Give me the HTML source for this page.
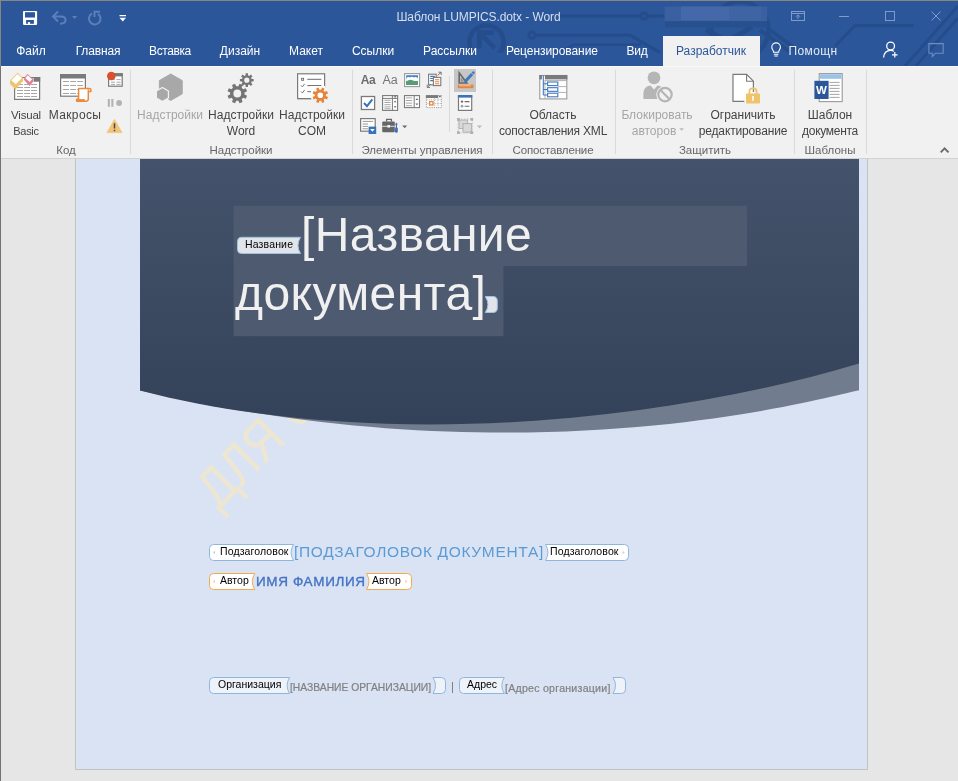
<!DOCTYPE html>
<html lang="ru">
<head>
<meta charset="utf-8">
<title>Шаблон LUMPICS.dotx - Word</title>
<style>
html,body{margin:0;padding:0;background:#e6e6e6}
body{width:958px;height:781px;overflow:hidden;position:relative;background:#e6e6e6;font-family:"Liberation Sans",sans-serif;font-size:12px;color:#444}
.a{position:absolute}
.t,.tg,#ttl1,#ttl2,#sub,#auth,#org,#addr{will-change:transform}
.t{position:absolute;white-space:nowrap;line-height:16px;height:16px;text-align:center}
#titlebar{left:0;top:0;width:958px;height:66px;background:#2b579a}
#titlebar .t{color:#fff}
#ribbon{left:0;top:66px;width:958px;height:92px;background:#f1f1f1;border-bottom:1px solid #d2d2d2;box-shadow:inset 0 1px 0 #f9f9f9}
.sep{position:absolute;width:1px;background:#dadada;top:70px;height:84px}
.dis{color:#a6a6a6}
.gl{color:#666;font-size:11.5px}
#doc{left:0;top:159px;width:958px;height:622px;background:#e6e6e6;overflow:hidden}
#page{left:75px;top:-10px;width:791px;height:619px;background:#dae3f3;border:1px solid #c3c3c3}
svg{position:absolute;overflow:visible}
.tg{position:absolute;white-space:nowrap;font-size:10.5px;line-height:14px;color:#000}
</style>
</head>
<body>
<!-- TITLE BAR -->
<div id="titlebar" class="a">
  <svg id="circuit" class="a" style="left:0;top:0" width="958" height="66" viewBox="0 0 958 66">
    <g fill="none" stroke="#254d8c" stroke-width="3.2">
      <clipPath id="cc"><rect x="460" y="20" width="60" height="32.5"/></clipPath>
      <circle cx="486.5" cy="42.3" r="17.1" stroke-width="4.6" clip-path="url(#cc)"/>
      <path d="M494.6 48 L481 34.4 M479.4 48.4 V32.6 H493.8" stroke-width="4.6"/>
      <path d="M559 16.1 H640 M648 16.1 H668"/>
      <circle cx="644.1" cy="16.1" r="3.2" stroke-width="3"/>
      <circle cx="532" cy="35.1" r="3.2" stroke-width="3"/>
      <path d="M536 35.1 H630 L660 52.5"/>
      <path d="M558 53 L574 44.6 H641" stroke-width="2.6"/>
      <circle cx="740" cy="30" r="28.5" stroke-width="4.5"/>
      <path d="M706 30 L728 41 L752 27" stroke-width="5"/>
      <path d="M835 46 L855 25.6 H914"/>
      <path d="M905 66 L958 6 M916 66 L958 18" stroke-width="3"/>
      <path d="M760 30 L790 52 M770 30 L800 52" stroke-width="4"/>
    </g>
    <rect x="665" y="20" width="102" height="7.5" fill="#27508f"/>
    <rect x="664.6" y="6.5" width="102.6" height="14.6" fill="#3a60a1"/>
    <rect x="681" y="6.5" width="48" height="14" fill="#4468a8"/>
    <rect x="729" y="6.5" width="32" height="14.4" fill="#3f64a4"/>
    <!-- QAT -->
    <rect x="23" y="10.9" width="14.1" height="14" rx="0.8" fill="#fff"/>
    <rect x="25" y="12.2" width="10" height="5.3" fill="#2b579a"/>
    <rect x="26.1" y="20" width="7.8" height="3.8" fill="#2b579a"/>
    <rect x="27.9" y="22.1" width="2.2" height="2" fill="#fff"/>
    <g fill="none" stroke="#5c7fb9" stroke-width="2">
      <path d="M58 11.5 L53 16.5 L58 21.5 M53.5 16.5 H61 Q65.6 16.5 65.6 20.3 Q65.6 23.5 60 23.7"/>
      <path d="M92 13.5 A5.8 5.8 0 1 0 98 13.8 M94.5 17 V11.8 H100"/>
    </g>
    <path d="M72 16 H77.2 L74.6 19 Z" fill="#5c7fb9"/>
    <path d="M119.5 15 H126 V16.2 H119.5 Z M119.5 17.8 H126 L122.75 21.5 Z" fill="#fff"/>
    <!-- window controls -->
    <g fill="none" stroke="#7f9acb" stroke-width="1">
      <rect x="791.5" y="11.5" width="13" height="9"/>
      <path d="M791.5 13.5 H804.5 M798 19 V15 M796 16.8 L798 14.8 L800 16.8"/>
      <path d="M839 16.5 H849"/>
      <rect x="885.5" y="11.5" width="9" height="9"/>
      <path d="M931.5 11.5 L940.5 20.5 M940.5 11.5 L931.5 20.5"/>
    </g>
    <!-- bulb -->
    <g fill="none" stroke="#fff" stroke-width="1.1">
      <path d="M773.6 52.3 C773.6 50 771.8 49.6 771.8 47.2 A4.3 4.3 0 0 1 780.4 47.2 C780.4 49.6 778.6 50 778.6 52.3 Z"/>
      <path d="M773.8 54.2 H778.4 M774.3 56 H777.9"/>
    </g>
    <!-- share person -->
    <g fill="none" stroke="#fff" stroke-width="1.3">
      <circle cx="890.6" cy="46" r="3.9"/>
      <path d="M883.6 57.5 C884 52.5 887 50.3 890.6 50.3 C892 50.3 893 50.6 894 51.2"/>
      <path d="M894.8 52 V57.6 M892 54.8 H897.6" stroke-width="1.2"/>
    </g>
    <!-- comment -->
    <path d="M928.9 43.6 H943.2 V53.2 H935.5 L932.3 56.6 V53.2 H928.9 Z" fill="none" stroke="#6d8dc3" stroke-width="1.1"/>
  </svg>
  <div class="t" style="left:380px;top:9px;width:197px;color:#d5dfee;letter-spacing:-0.08px">Шаблон LUMPICS.dotx - Word</div>
  <div class="t" style="left:11px;top:43px;width:40px">Файл</div>
  <div class="t" style="left:68px;top:43px;width:60px;letter-spacing:-0.15px">Главная</div>
  <div class="t" style="left:140px;top:43px;width:60px;letter-spacing:-0.4px">Вставка</div>
  <div class="t" style="left:210px;top:43px;width:60px">Дизайн</div>
  <div class="t" style="left:276px;top:43px;width:60px">Макет</div>
  <div class="t" style="left:343px;top:43px;width:60px">Ссылки</div>
  <div class="t" style="left:410px;top:43px;width:80px">Рассылки</div>
  <div class="t" style="left:491.9px;top:43px;width:120px;letter-spacing:-0.05px">Рецензирование</div>
  <div class="t" style="left:616.8px;top:43px;width:40px;letter-spacing:-0.3px">Вид</div>
  <div class="a" style="left:663px;top:36px;width:97px;height:30px;background:#f1f1f1"></div>
  <div class="t" style="left:662px;top:43px;width:98px;color:#2b579a">Разработчик</div>
  <div class="t" style="left:788px;top:43px;width:50px;color:#e3eaf5;letter-spacing:0.4px">Помощн</div>
</div>
<!-- RIBBON -->
<div id="ribbon" class="a"></div>
<div class="sep" style="left:130px"></div>
<div class="sep" style="left:352px"></div>
<div class="sep" style="left:492px"></div>
<div class="sep" style="left:615px"></div>
<div class="sep" style="left:794px"></div>
<div class="sep" style="left:866px"></div>
<div class="sep" style="left:449px;top:76px;height:56px"></div>

<div class="t" style="left:0px;top:107px;width:52px;letter-spacing:-0.2px;font-size:11.5px">Visual</div>
<div class="t" style="left:0px;top:123px;width:52px;letter-spacing:-0.3px;font-size:11px">Basic</div>
<div class="t" style="left:45px;top:107px;width:60px;letter-spacing:0.35px">Макросы</div>
<div class="t gl" style="left:36px;top:142px;width:60px">Код</div>

<div class="t dis" style="left:130px;top:107px;width:80px">Надстройки</div>
<div class="t" style="left:201px;top:107px;width:80px">Надстройки</div>
<div class="t" style="left:201px;top:123px;width:80px">Word</div>
<div class="t" style="left:272px;top:107px;width:80px">Надстройки</div>
<div class="t" style="left:272px;top:123px;width:80px">COM</div>
<div class="t gl" style="left:201px;top:142px;width:80px">Надстройки</div>

<div class="t" style="left:359px;top:72px;width:18px;font-weight:bold;color:#6e6e6e;letter-spacing:-0.3px">Aa</div>
<div class="t" style="left:381px;top:72px;width:18px;color:#777;font-size:12.5px;letter-spacing:-0.2px">Aa</div>
<div class="t gl" style="left:352px;top:142px;width:140px">Элементы управления</div>

<div class="t" style="left:493px;top:107px;width:120px">Область</div>
<div class="t" style="left:493px;top:123px;width:120px;letter-spacing:-0.2px">сопоставления XML</div>
<div class="t gl" style="left:493px;top:142px;width:120px;letter-spacing:-0.15px">Сопоставление</div>

<div class="t dis" style="left:617px;top:107px;width:80px">Блокировать</div>
<div class="t dis" style="left:614px;top:123px;width:80px">авторов</div>
<div class="t" style="left:693px;top:107px;width:100px">Ограничить</div>
<div class="t" style="left:693px;top:123px;width:100px;letter-spacing:-0.15px">редактирование</div>
<div class="t gl" style="left:655px;top:142px;width:100px">Защитить</div>

<div class="t" style="left:790px;top:107px;width:80px">Шаблон</div>
<div class="t" style="left:790px;top:123px;width:80px;letter-spacing:-0.3px">документа</div>
<div class="t gl" style="left:790px;top:142px;width:80px">Шаблоны</div>

<!-- RIBBON-ICONS-START -->
<svg class="a" style="left:0;top:0" width="958" height="160" viewBox="0 0 958 160">
<rect x="14.6" y="77.6" width="25" height="21.8" fill="#fff" stroke="#7a7a7a" stroke-width="1.2"/>
<rect x="33.6" y="77" width="6.6" height="4.7" fill="#7a7a7a"/>
<path d="M17 84.5 H23 M24.1 84.5 H30.1 M31.1 84.5 H37" stroke="#a6a6a6" stroke-width="1" fill="none"/>
<path d="M17 87.5 H23 M24.1 87.5 H30.1 M31.1 87.5 H37" stroke="#a6a6a6" stroke-width="1" fill="none"/>
<path d="M17 90.5 H23 M24.1 90.5 H30.1 M31.1 90.5 H37" stroke="#a6a6a6" stroke-width="1" fill="none"/>
<path d="M17 93.5 H23 M24.1 93.5 H30.1 M31.1 93.5 H37" stroke="#a6a6a6" stroke-width="1" fill="none"/>
<path d="M17 96.5 H23 M24.1 96.5 H30.1 M31.1 96.5 H37" stroke="#a6a6a6" stroke-width="1" fill="none"/>
<path d="M10 80.5 L17.5 72.7 L23 77.9 L23 81 L15.4 89.4 L10 83.7 Z" fill="#eec56f"/>
<path d="M11.3 80.3 L17.5 74.1 L22 78.1 L15.8 84.2 Z" fill="#fff"/>
<path d="M24.1 77.9 L27.4 74.1 L33.2 79 L33.2 81.6 L29.5 86 L24.1 80 Z" fill="#e47d92"/>
<path d="M25.4 78.2 L27.7 75.3 L32.1 79.3 L29.7 82.1 Z" fill="#fff"/>
<rect x="60.6" y="74.6" width="24.8" height="21.6" fill="#fff" stroke="#7a7a7a" stroke-width="1.2"/>
<rect x="60" y="74" width="26" height="4.5" fill="#7a7a7a"/>
<path d="M62.9 81.5 H68.9 M70.2 81.5 H76 M77.2 81.5 H83.1" stroke="#a6a6a6" stroke-width="1" fill="none"/>
<path d="M62.9 85.5 H68.9 M70.2 85.5 H76 M77.2 85.5 H83.1" stroke="#a6a6a6" stroke-width="1" fill="none"/>
<path d="M62.9 89.5 H68.9 M70.2 89.5 H76 M77.2 89.5 H83.1" stroke="#a6a6a6" stroke-width="1" fill="none"/>
<path d="M62.9 93.5 H68.9 M70.2 93.5 H76 M77.2 93.5 H83.1" stroke="#a6a6a6" stroke-width="1" fill="none"/>
<rect x="77" y="86.8" width="15" height="16" fill="#f1f1f1" opacity="0"/>
<path d="M78.6 88.5 H89 Q90.9 88.5 90.9 90.2 V91.6 H88.3 V98.8 Q88.3 101.2 86 101.2 H76.8 Q76 99.2 77.8 99 H78.6 Z" fill="#fff" stroke="#ea8a3c" stroke-width="1.5" stroke-linejoin="round"/>
<path d="M76.4 100.2 H84.8" stroke="#ea8a3c" stroke-width="2.2" fill="none"/>
<path d="M88.3 91.6 V89.2" stroke="#ea8a3c" stroke-width="1.2" fill="none"/>
<rect x="108.6" y="73.8" width="13.6" height="12.4" fill="#fff" stroke="#7a7a7a" stroke-width="1.2"/>
<rect x="108" y="73.2" width="14.8" height="3.2" fill="#7a7a7a"/>
<path d="M111 79.6 H115 M116.5 79.6 H120.6" stroke="#a9a9a9" stroke-width="1" fill="none"/>
<path d="M111 82.2 H115 M116.5 82.2 H120.6" stroke="#a9a9a9" stroke-width="1" fill="none"/>
<path d="M111 84.4 H115 M116.5 84.4 H120.6" stroke="#a9a9a9" stroke-width="1" fill="none"/>
<circle cx="111.3" cy="76" r="4.3" fill="#d9502e"/>
<rect x="107.8" y="99" width="2.1" height="7.8" fill="#b3b3b3"/><rect x="111.3" y="99" width="2.1" height="7.8" fill="#b3b3b3"/><circle cx="119.1" cy="103" r="2.9" fill="#b3b3b3"/>
<path d="M114.5 119.4 L122 132.6 H107 Z" fill="#f2c477" stroke="#f2c477" stroke-width="0.8" stroke-linejoin="round"/>
<path d="M114.5 123.3 V128.6 M114.5 129.8 V131.3" stroke="#4a4a4a" stroke-width="1.5" fill="none"/>
<path d="M170.80 74.00 L182.23 80.60 L182.23 93.80 L170.80 100.40 L159.37 93.80 L159.37 80.60 Z" fill="#a8a8a8" stroke="#a8a8a8" stroke-width="1" stroke-linejoin="round"/>
<path d="M162.40 87.50 L168.46 91.00 L168.46 98.00 L162.40 101.50 L156.34 98.00 L156.34 91.00 Z" fill="#a8a8a8" stroke="#f1f1f1" stroke-width="1.3" stroke-linejoin="round"/>
<path d="M244.52 94.57 L247.05 95.74 L245.77 98.81 L243.16 97.85 L241.65 99.36 L242.61 101.97 L239.54 103.25 L238.37 100.72 L236.23 100.72 L235.06 103.25 L231.99 101.97 L232.95 99.36 L231.44 97.85 L228.83 98.81 L227.55 95.74 L230.08 94.57 L230.08 92.43 L227.55 91.26 L228.83 88.19 L231.44 89.15 L232.95 87.64 L231.99 85.03 L235.06 83.75 L236.23 86.28 L238.37 86.28 L239.54 83.75 L242.61 85.03 L241.65 87.64 L243.16 89.15 L245.77 88.19 L247.05 91.26 L244.52 92.43 Z M241.20 93.50 A3.9 3.9 0 1 0 233.40 93.50 A3.9 3.9 0 1 0 241.20 93.50 Z" fill="#757575" fill-rule="evenodd"/>
<path d="M251.65 78.99 L253.70 79.04 L253.70 81.36 L251.65 81.41 L251.09 82.77 L252.50 84.26 L250.86 85.90 L249.37 84.49 L248.01 85.05 L247.96 87.10 L245.64 87.10 L245.59 85.05 L244.23 84.49 L242.74 85.90 L241.10 84.26 L242.51 82.77 L241.95 81.41 L239.90 81.36 L239.90 79.04 L241.95 78.99 L242.51 77.63 L241.10 76.14 L242.74 74.50 L244.23 75.91 L245.59 75.35 L245.64 73.30 L247.96 73.30 L248.01 75.35 L249.37 75.91 L250.86 74.50 L252.50 76.14 L251.09 77.63 Z M249.40 80.20 A2.6 2.6 0 1 0 244.20 80.20 A2.6 2.6 0 1 0 249.40 80.20 Z" fill="#757575" fill-rule="evenodd"/>
<rect x="297.6" y="73.8" width="27" height="24.8" fill="#fff" stroke="#7a7a7a" stroke-width="1.2"/>
<rect x="301.6" y="78.3" width="2" height="2" fill="none" stroke="#6b6b6b" stroke-width="0.9"/>
<path d="M307.3 79.3 H321.4 M307.3 85.6 H321.4 M307.3 91.7 H313" stroke="#6b6b6b" stroke-width="1" fill="none"/>
<path d="M301 85.4 L302.4 86.9 L304.6 83.8 M301 91.5 L302.4 93 L304.6 89.9" stroke="#6b6b6b" stroke-width="0.9" fill="none"/>
<circle cx="320.3" cy="95.2" r="9" fill="#f1f1f1"/>
<rect x="311" y="86" width="14.2" height="13.2" fill="#fff"/>
<path d="M311.2 98.6 H297.6" stroke="#7a7a7a" stroke-width="1.2"/>
<path d="M325.84 96.02 L328.00 96.97 L327.00 99.39 L324.80 98.54 L323.64 99.70 L324.49 101.90 L322.07 102.90 L321.12 100.74 L319.48 100.74 L318.53 102.90 L316.11 101.90 L316.96 99.70 L315.80 98.54 L313.60 99.39 L312.60 96.97 L314.76 96.02 L314.76 94.38 L312.60 93.43 L313.60 91.01 L315.80 91.86 L316.96 90.70 L316.11 88.50 L318.53 87.50 L319.48 89.66 L321.12 89.66 L322.07 87.50 L324.49 88.50 L323.64 90.70 L324.80 91.86 L327.00 91.01 L328.00 93.43 L325.84 94.38 Z M323.10 95.20 A2.8 2.8 0 1 0 317.50 95.20 A2.8 2.8 0 1 0 323.10 95.20 Z" fill="#e8833a" fill-rule="evenodd"/>
<rect x="404.6" y="73.6" width="15" height="13" fill="#fff" stroke="#9a9a9a" stroke-width="1.1"/>
<rect x="406.2" y="75.2" width="11.8" height="9.8" fill="#4a86c5"/>
<path d="M406.2 78.5 Q408 76.3 410 77.6 Q411.5 76 413.5 77.4 Q415.5 76.4 418 78 V81 H406.2 Z" fill="#fff"/>
<path d="M406.2 85 V81.6 Q410 78.6 413 80.6 Q415.5 82 418 80.8 V85 Z" fill="#5c9c75"/>
<rect x="428.6" y="74.2" width="7.6" height="10.6" fill="#fff" stroke="#7a7a7a" stroke-width="1.1"/>
<path d="M430.2 76.4 H434.8 M430.2 78.5 H433 M430.2 80.6 H433" stroke="#3f78c0" stroke-width="1.1" fill="none"/>
<rect x="433.4" y="77.4" width="7.4" height="8.2" fill="#fff" stroke="#7a7a7a" stroke-width="1.1"/>
<path d="M435 79.8 H439.3 M435 81.8 H439.3 M435 83.8 H439.3" stroke="#e8833a" stroke-width="1.1" fill="none"/>
<path d="M437.6 75.4 L441 72.4 M438.4 72.2 H441.2 V75 M430.6 84.4 L427.4 87.2 M427.2 84.6 V87.4 H430" stroke="#6b6b6b" stroke-width="0.9" fill="none"/>
<rect x="361.4" y="96.5" width="13.2" height="13" fill="#fff" stroke="#7a7a7a" stroke-width="1.3"/>
<path d="M364 103 L367 106.2 L372.3 99.4" stroke="#3b73b9" stroke-width="2" fill="none"/>
<rect x="382.6" y="95.6" width="15" height="14.8" fill="#fff" stroke="#7a7a7a" stroke-width="1.1"/>
<path d="M392.4 95.6 V110.4 M382.6 98.4 H397.6" stroke="#7a7a7a" stroke-width="1" fill="none"/>
<path d="M384.4 100.3 H390.6" stroke="#9a9a9a" stroke-width="0.9" fill="none"/>
<path d="M384.4 102.5 H390.6" stroke="#9a9a9a" stroke-width="0.9" fill="none"/>
<path d="M384.4 104.7 H390.6" stroke="#9a9a9a" stroke-width="0.9" fill="none"/>
<path d="M384.4 106.9 H390.6" stroke="#9a9a9a" stroke-width="0.9" fill="none"/>
<path d="M384.4 108.8 H390.6" stroke="#9a9a9a" stroke-width="0.9" fill="none"/>
<path d="M393.6 96.3 H396.6 L395.1 97.9 Z M393.7 102.3 L395.1 100.6 L396.5 102.3 Z M393.7 106.3 L395.1 108 L396.5 106.3 Z" fill="#6b6b6b"/>
<rect x="404.5" y="95.6" width="15" height="12" fill="#fff" stroke="#7a7a7a" stroke-width="1.1"/>
<path d="M414.2 95.6 V107.6" stroke="#7a7a7a" stroke-width="1" fill="none"/>
<path d="M405.9 97.9 H412.2" stroke="#9a9a9a" stroke-width="0.9" fill="none"/>
<path d="M405.9 100.5 H412.2" stroke="#9a9a9a" stroke-width="0.9" fill="none"/>
<path d="M405.9 103.1 H412.2" stroke="#9a9a9a" stroke-width="0.9" fill="none"/>
<path d="M405.9 105.7 H412.2" stroke="#9a9a9a" stroke-width="0.9" fill="none"/>
<path d="M415.4 100 L416.9 98.2 L418.4 100 Z M415.4 103.4 L416.9 105.2 L418.4 103.4 Z" fill="#6b6b6b"/>
<rect x="426.4" y="96" width="15" height="11.6" fill="#fff" stroke="#a0a0a0" stroke-width="1" stroke-dasharray="1.2 1"/>
<rect x="425.9" y="95.1" width="16" height="2.9" fill="#7a7a7a"/>
<rect x="438.2" y="95.6" width="3.4" height="2.6" fill="#fff"/><path d="M438.6 96 H441.2 L439.9 97.7 Z" fill="#6b6b6b"/>
<path d="M426.4 99.8 H441.4 M426.4 103.7 H441.4 M434.6 98 V107.6 M438 98 V107.6" stroke="#b0b0b0" stroke-width="0.9" fill="none" stroke-dasharray="1.2 1"/>
<rect x="429.6" y="101.6" width="3.4" height="3.4" fill="#fff" stroke="#e8833a" stroke-width="1.3"/>
<rect x="360.6" y="118.6" width="14.6" height="12.6" fill="#fff" stroke="#7a7a7a" stroke-width="1.2"/>
<path d="M362.6 121.4 H373 M362.6 124 H368 M362.6 126.4 H368 M362.6 128.8 H368" stroke="#9a9a9a" stroke-width="1" fill="none"/>
<rect x="368.6" y="126.6" width="7.6" height="7.4" fill="#3b73b9"/>
<path d="M370.2 129 H374.6 L372.4 131.8 Z" fill="#fff"/>
<path d="M386.6 121.6 V119.4 H391.4 V121.6" stroke="#666" stroke-width="1.3" fill="none"/>
<rect x="382.2" y="121.4" width="12.6" height="10.8" rx="1" fill="#666"/>
<path d="M382.2 126.3 H394.8" stroke="#f1f1f1" stroke-width="0.9"/>
<rect x="387.4" y="125" width="2.6" height="2.6" fill="#f1f1f1"/>
<path d="M396.4 124 V128" stroke="#3b73b9" stroke-width="1.2" fill="none"/><path d="M394.9 124.6 L396.4 122.6 L397.9 124.6 Z" fill="#3b73b9"/><rect x="395" y="127.4" width="2.8" height="5.4" rx="1.2" fill="#3b73b9"/>
<path d="M402.2 125.4 H407.2 L404.7 128.2 Z" fill="#6b6b6b"/>
<rect x="454" y="69" width="22" height="23" fill="#c6c6c6"/>
<path d="M459.2 72.8 V83 H466.8 Z" fill="none" stroke="#666" stroke-width="1.6" stroke-linejoin="miter"/>
<path d="M461.2 78.4 V81.2 H463.4 Z" fill="#c6c6c6" stroke="#666" stroke-width="0.6"/>
<path d="M464.2 82.4 L464.8 79.8 L471 73 L473.2 75 L467 81.8 Z" fill="#3f78c0"/>
<path d="M471.6 72.4 L472.6 71.4 Q473.4 71 474 71.6 L474.6 72.2 Q475 73 474.4 73.6 L473.6 74.5 Z" fill="#3f78c0"/>
<rect x="457.8" y="84.6" width="15.6" height="3.6" fill="#e8833a"/>
<path d="M460 84.6 V86.4 M462 84.6 V86.4 M464 84.6 V86.4 M466 84.6 V86.4 M468 84.6 V86.4 M470 84.6 V86.4" stroke="#fff" stroke-width="0.7"/>
<rect x="458.5" y="96" width="13.2" height="14.4" fill="#fff" stroke="#7a7a7a" stroke-width="1.2"/>
<rect x="457.9" y="95" width="14.4" height="2.6" fill="#3b73b9"/>
<circle cx="462" cy="101.6" r="1.2" fill="#6b6b6b"/><circle cx="462" cy="106.2" r="1" fill="none" stroke="#6b6b6b" stroke-width="0.8"/>
<path d="M464.6 101.6 H469.4 M464.6 106.2 H469.4" stroke="#6b6b6b" stroke-width="1.1"/>
<rect x="459" y="120" width="8.6" height="8.6" fill="#d9d9d9" stroke="#b0b0b0" stroke-width="1"/>
<rect x="463" y="123.6" width="8.6" height="8.6" fill="#d9d9d9" stroke="#b0b0b0" stroke-width="1"/>
<path d="M458 119 H472.4 V133 H458 Z" fill="none" stroke="#bdbdbd" stroke-width="0.8" stroke-dasharray="1.5 1.5"/>
<rect x="457" y="118" width="2.8" height="2.8" fill="#b0b0b0"/>
<rect x="470.4" y="118" width="2.8" height="2.8" fill="#b0b0b0"/>
<rect x="457" y="131.2" width="2.8" height="2.8" fill="#b0b0b0"/>
<rect x="470.4" y="131.2" width="2.8" height="2.8" fill="#b0b0b0"/>
<path d="M477 125.4 H482 L479.5 128.2 Z" fill="#b9b9b9"/>
<rect x="539.8" y="75.5" width="27" height="23.4" fill="#fff" stroke="#9a9a9a" stroke-width="1.1"/>
<rect x="545" y="75" width="22.4" height="4.4" fill="#7a7a7a"/>
<rect x="539.3" y="75" width="2.6" height="4.4" fill="#7a7a7a"/>
<path d="M545 80.6 H566.6 M558 86.6 H566.6 M558 92.4 H566.6 M545 80 V98.8" stroke="#a9a9a9" stroke-width="0.9" fill="none"/>
<path d="M543.3 75.4 V95 M543.3 83.8 H547.4 M543.3 89.5 H547.4 M543.3 95 H547.4" stroke="#3f78c0" stroke-width="1.1" fill="none"/>
<rect x="547.6" y="82" width="10.2" height="3.6" fill="#fff" stroke="#3f78c0" stroke-width="1.1"/>
<rect x="547.6" y="87.7" width="10.2" height="3.6" fill="#fff" stroke="#3f78c0" stroke-width="1.1"/>
<rect x="547.6" y="93.2" width="10.2" height="3.6" fill="#fff" stroke="#3f78c0" stroke-width="1.1"/>
<circle cx="654" cy="77.8" r="6.4" fill="#b5b5b5"/>
<path d="M643.4 99 V93 Q643.6 86.4 650.4 85.4 L654 89.6 L657.6 85.4 Q661 85.8 662.6 88 V99 Z" fill="#b5b5b5"/>
<circle cx="665" cy="94.6" r="8.8" fill="#f1f1f1"/>
<circle cx="665" cy="94.6" r="6.7" fill="none" stroke="#b5b5b5" stroke-width="2.2"/>
<path d="M660.4 90 L669.6 99.2" stroke="#b5b5b5" stroke-width="2.2"/>
<path d="M679.2 128.2 H684 L681.6 130.8 Z" fill="#b9b9b9"/>
<path d="M733 74.4 H746.6 L753.4 81.2 V101.4 H733 Z" fill="#fff" stroke="#7a7a7a" stroke-width="1.2" stroke-linejoin="miter"/>
<path d="M746.6 74.4 V81.2 H753.4" fill="none" stroke="#7a7a7a" stroke-width="1.1"/>
<rect x="744.6" y="92" width="16.6" height="12.4" fill="#f1f1f1"/><rect x="744.6" y="92" width="9.4" height="10" fill="#fff"/>
<path d="M749.4 94 V91.4 Q749.4 88.4 753 88.4 Q756.6 88.4 756.6 91.4 V94" fill="none" stroke="#f0c36a" stroke-width="1.8"/>
<rect x="746" y="93.4" width="14" height="10" rx="0.8" fill="#f0c36a"/>
<path d="M753 96.6 V100.2" stroke="#fff" stroke-width="1.6" stroke-linecap="round"/>
<rect x="819.2" y="73.6" width="23" height="28" fill="#fff" stroke="#9a9a9a" stroke-width="1.1"/>
<rect x="819.8" y="74.2" width="21.8" height="4.6" fill="#9cc2e8"/>
<path d="M829.6 82.4 H839.6" stroke="#9a9a9a" stroke-width="0.9"/>
<path d="M829.6 85.4 H839.6" stroke="#9a9a9a" stroke-width="0.9"/>
<path d="M829.6 88.4 H839.6" stroke="#9a9a9a" stroke-width="0.9"/>
<path d="M829.6 91.4 H839.6" stroke="#9a9a9a" stroke-width="0.9"/>
<path d="M829.6 94.4 H839.6" stroke="#9a9a9a" stroke-width="0.9"/>
<path d="M829.6 97.4 H839.6" stroke="#9a9a9a" stroke-width="0.9"/>
<rect x="814.4" y="80.8" width="14.2" height="18.2" fill="#2b579a"/>
<text x="821.5" y="94.4" font-family="Liberation Sans, sans-serif" font-size="11.5" font-weight="bold" fill="#fff" text-anchor="middle">W</text>
<path d="M940.7 152.3 L944.6 148.3 L948.5 152.3" stroke="#6a6a6a" stroke-width="1.9" fill="none"/>
</svg>
<!-- RIBBON-ICONS-END -->
<!-- DOCUMENT -->
<div id="doc" class="a">
  <div id="page" class="a"></div>
</div>
<!-- watermark -->
<svg class="a" style="left:0;top:0" width="958" height="781" viewBox="0 0 958 781"><text transform="translate(218.4,510.7) rotate(-45) scale(0.87,1)" font-family="Liberation Sans, sans-serif" font-size="55" fill="#ede7d2">ДЛЯ С</text></svg>
<!-- cover shape -->
<svg class="a" style="left:0;top:0" width="958" height="781" viewBox="0 0 958 781">
  <defs>
    <linearGradient id="dg" x1="0" y1="159" x2="0" y2="425" gradientUnits="userSpaceOnUse">
      <stop offset="0" stop-color="#44526b"/><stop offset="1" stop-color="#344259"/>
    </linearGradient>
  </defs>
  <path d="M140 300 L140 390.4 C555.5 487.1 859.2 386.6 859 390.7 L859 300 Z" fill="#717c8e"/>
  <path d="M140 159 L859 159 L859 363.4 C657.5 424.1 370.4 450.7 140 390.4 Z" fill="url(#dg)"/>
  <rect x="233.5" y="205.7" width="513.5" height="60.3" fill="#4d5a70"/>
  <rect x="233.5" y="266" width="270" height="70.2" fill="#4d5a70"/>
</svg>
<div id="ttl1" class="a" style="left:300.6px;top:206px;letter-spacing:0.36px;font-size:48px;line-height:58px;color:#f0f0f0;white-space:nowrap">[Название</div>
<div id="ttl2" class="a" style="left:235px;top:265px;letter-spacing:0.38px;font-size:48px;line-height:58px;color:#f0f0f0;white-space:nowrap">документа]</div>

<svg class="a" style="left:0;top:0" width="958" height="781" viewBox="0 0 958 781">
  <path d="M241.5 237.3 H300.5 Q295.5 245.4 300.5 253.5 H241.5 Q237.5 253.5 237.5 249.5 V241.3 Q237.5 237.3 241.5 237.3 Z" fill="#e1e5ea" stroke="#9fc1e2" stroke-width="1"/>
  <path d="M485.3 296.5 H493 Q497.3 296.5 497.3 301 V308 Q497.3 312.5 493 312.5 H485.3 Q490.5 304.5 485.3 296.5 Z" fill="#e1e5ea" stroke="#9fc1e2" stroke-width="1"/>
  <path d="M213.5 544.5 H293.5 Q288.5 552.5 293.5 560.5 H213.5 Q209.5 560.5 209.5 556.5 V548.5 Q209.5 544.5 213.5 544.5 Z" fill="#fff" stroke="#8fb7dd" stroke-width="1"/>
  <path d="M545.5 544.5 H624.5 Q628.5 544.5 628.5 548.5 V556.5 Q628.5 560.5 624.5 560.5 H545.5 Q550.5 552.5 545.5 544.5 Z" fill="#fff" stroke="#8fb7dd" stroke-width="1"/>
  <path d="M213.5 573.5 H254.8 Q249.8 581.5 254.8 589.5 H213.5 Q209.5 589.5 209.5 585.5 V577.5 Q209.5 573.5 213.5 573.5 Z" fill="#fff" stroke="#f4a94a" stroke-width="1"/>
  <path d="M366.5 573.5 H407.5 Q411.5 573.5 411.5 577.5 V585.5 Q411.5 589.5 407.5 589.5 H366.5 Q371.5 581.5 366.5 573.5 Z" fill="#fff" stroke="#f4a94a" stroke-width="1"/>
  <path d="M213.5 677.5 H289.6 Q284.6 685.5 289.6 693.5 H213.5 Q209.5 693.5 209.5 689.5 V681.5 Q209.5 677.5 213.5 677.5 Z" fill="#eef2f9" stroke="#8fb7dd" stroke-width="1"/>
  <path d="M433 677.5 H441.5 Q445.5 677.5 445.5 681.5 V689.5 Q445.5 693.5 441.5 693.5 H433 Q438 685.5 433 677.5 Z" fill="#eef2f9" stroke="#8fb7dd" stroke-width="1"/>
  <path d="M463.5 677.5 H504.3 Q499.3 685.5 504.3 693.5 H463.5 Q459.5 693.5 459.5 689.5 V681.5 Q459.5 677.5 463.5 677.5 Z" fill="#eef2f9" stroke="#8fb7dd" stroke-width="1"/>
  <path d="M613 677.5 H621.5 Q625.5 677.5 625.5 681.5 V689.5 Q625.5 693.5 621.5 693.5 H613 Q618 685.5 613 677.5 Z" fill="#eef2f9" stroke="#8fb7dd" stroke-width="1"/>
  <path d="M215 550.7 L213 552.5 L215 554.3 Z" fill="#b9d0ea"/>
  <path d="M622.6 550.7 L624.6 552.5 L622.6 554.3 Z" fill="#b9d0ea"/>
  <path d="M215 579.7 L213 581.5 L215 583.3 Z" fill="#f8cf9e"/>
  <path d="M405.4 579.7 L407.4 581.5 L405.4 583.3 Z" fill="#f8cf9e"/>
</svg>
<div class="tg" style="left:245px;top:237px;letter-spacing:0.15px">Название</div>
<div class="tg" style="left:220px;top:544px;letter-spacing:0.12px">Подзаголовок</div>
<div class="tg" style="left:550px;top:544px;letter-spacing:0.12px">Подзаголовок</div>
<div class="tg" style="left:220px;top:573px">Автор</div>
<div class="tg" style="left:372px;top:573px">Автор</div>
<div class="tg" style="left:217.5px;top:677px">Организация</div>
<div class="tg" style="left:467px;top:677px">Адрес</div>
<div id="sub" class="a" style="left:293.8px;top:543px;font-size:15.5px;line-height:18px;letter-spacing:0.67px;color:#5b9bd5;white-space:nowrap">[ПОДЗАГОЛОВОК ДОКУМЕНТА]</div>
<div id="auth" class="a" style="left:255.6px;top:573px;font-size:13.5px;line-height:18px;letter-spacing:0.64px;-webkit-text-stroke:0.35px #4472c4;color:#4472c4;white-space:nowrap">ИМЯ ФАМИЛИЯ</div>
<div id="org" class="a" style="left:290.3px;top:679.8px;-webkit-text-stroke:0.2px #808080;font-size:10.3px;line-height:16px;color:#808080;white-space:nowrap">[НАЗВАНИЕ ОРГАНИЗАЦИИ]</div>
<div id="bar" class="a" style="left:451.6px;top:682px;width:1.1px;height:10.6px;background:#808080"></div>
<div id="addr" class="a" style="left:505px;top:679.6px;-webkit-text-stroke:0.2px #808080;font-size:10.6px;line-height:16px;letter-spacing:0.25px;color:#808080;white-space:nowrap">[Адрес организации]</div>
<div class="a" style="left:0;top:0;width:1px;height:66px;background:#8a867f"></div>
<div class="a" style="left:0;top:66px;width:1px;height:715px;background:#737373"></div>
<div class="a" style="left:0;top:0;width:958px;height:1px;background:#8a867f"></div>
</body>
</html>
